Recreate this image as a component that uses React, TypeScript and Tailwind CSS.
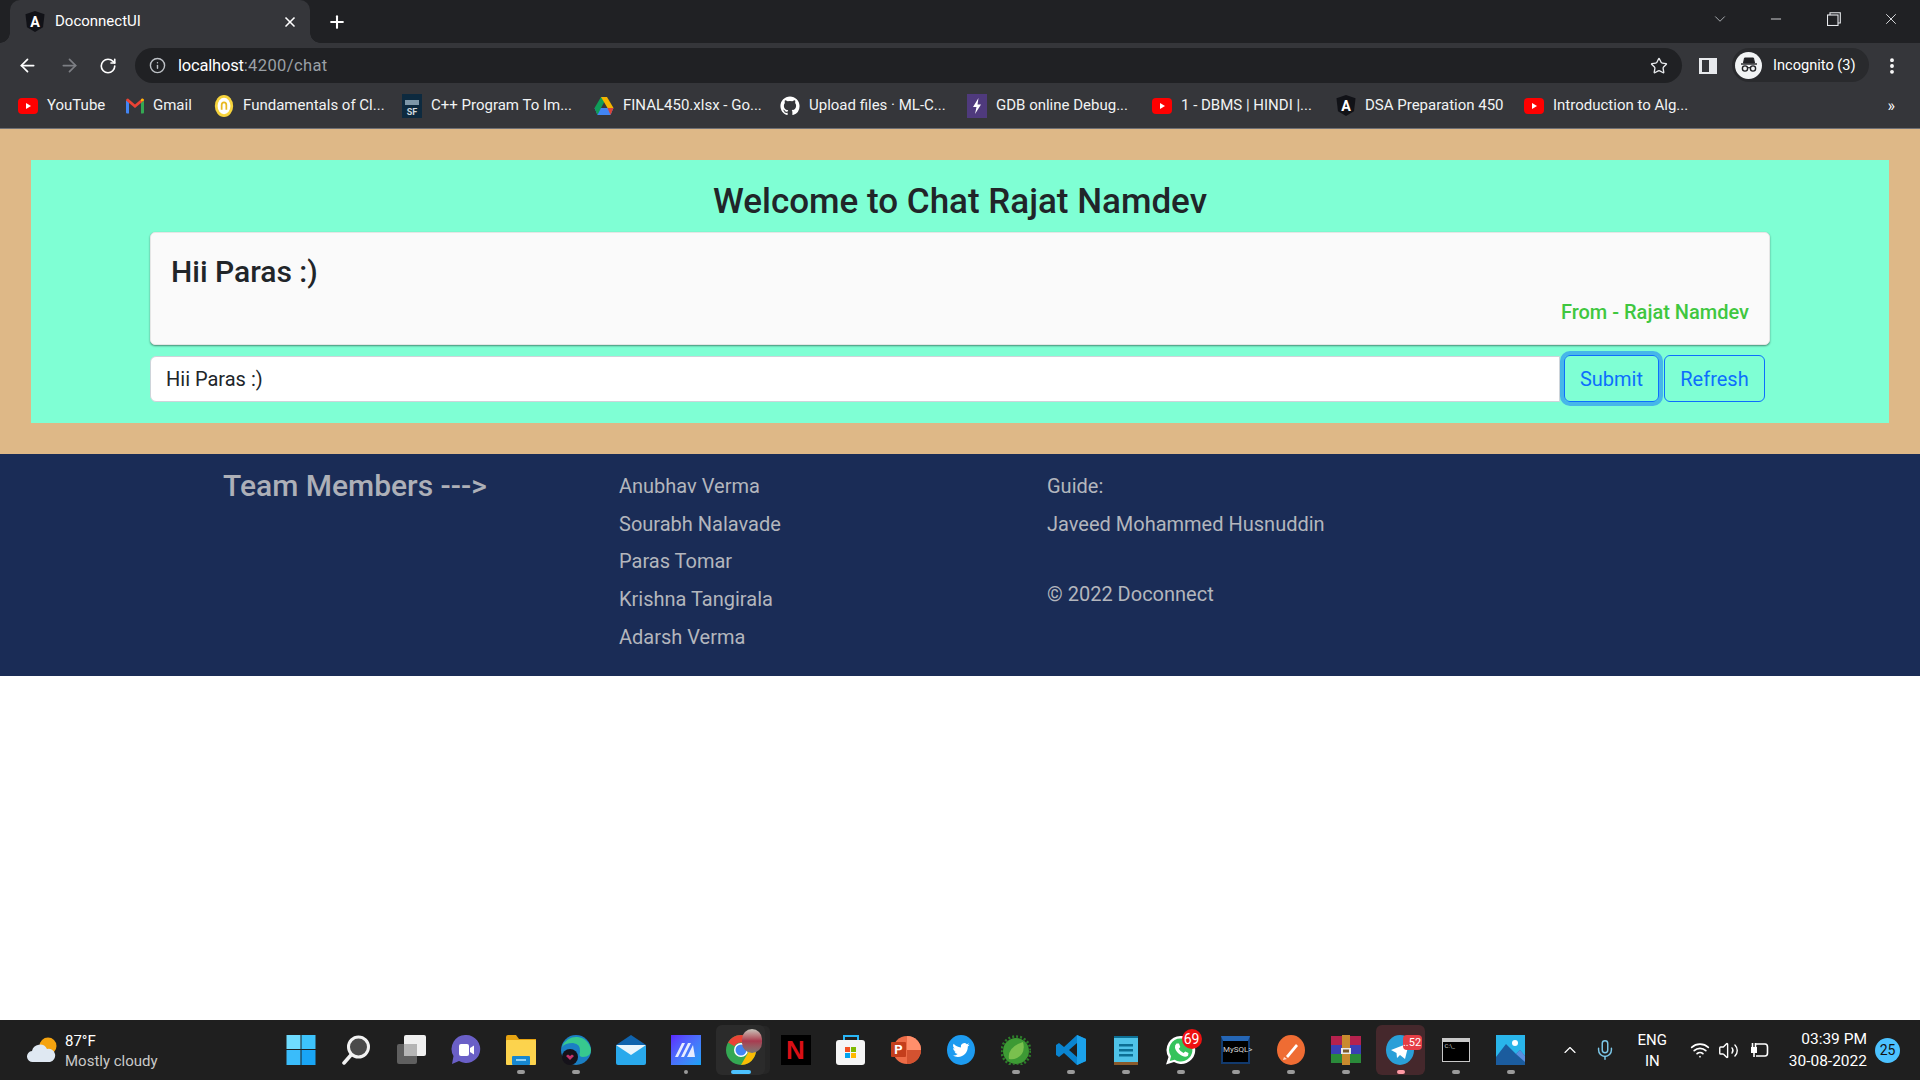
import React from "react";
import { ArrowLeft, ArrowRight, ChevronDown, ChevronUp, Info, Minus, Mic, MoreVertical, Plus, RotateCw, Star, Volume2, Wifi, X } from "lucide-react";

function AngularIcon() {
  return (
    <svg viewBox="0 0 20 22" className="w-[20px] h-[21px]">
      <path d="M10 0 L20 3.5 L18.4 17 L10 22 L1.6 17 L0 3.5 Z" fill="#111217" />
      <text x="10" y="16.5" textAnchor="middle" fontSize="15" fontWeight="700" fill="#fff" fontFamily="Roboto, sans-serif">A</text>
    </svg>
  );
}

function YoutubeIcon() {
  return (
    <svg viewBox="0 0 20 16" className="w-[20px] h-[16px]">
      <rect width="20" height="16" rx="4" fill="#f00" />
      <path d="M8 5 L13 8 L8 11 Z" fill="#fff" />
    </svg>
  );
}

function GmailIcon() {
  return (
    <svg viewBox="0 0 18 15" className="w-[18px] h-[16px]">
      <path d="M0 2 L3 3 V15 H1 Q0 15 0 14 Z" fill="#4285f4" />
      <path d="M15 3 L18 2 V14 Q18 15 17 15 H15 Z" fill="#34a853" />
      <path d="M0 2 Q0 0 2 0 L9 6 L16 0 Q18 0 18 2 L9 9.5 Z" fill="#ea4335" />
      <path d="M15 3 L18 2 Q18 0 16 0 L15 1 Z" fill="#fbbc04" />
    </svg>
  );
}

function CoinIcon() {
  return (
    <svg viewBox="0 0 20 24" className="w-[20px] h-[22px]">
      <ellipse cx="10" cy="12" rx="10" ry="12" fill="#f6d33c" />
      <ellipse cx="10" cy="12" rx="7" ry="9" fill="#fff" />
      <path d="M6.5 11 A3.5 4 0 0 1 13.5 11 V16 H11.6 V11 A1.6 2 0 0 0 8.4 11 V16 H6.5 Z" fill="#e8b923" />
    </svg>
  );
}

function SfIcon() {
  return (
    <div className="w-[20px] h-[24px] bg-[#0d2a3f] flex flex-col items-center justify-end pb-[1px] text-[9px] leading-[10px] font-bold text-[#cfd8dc]">
      <span className="w-[14px] h-[5px] mb-[2px] bg-[#7d97a8]" />
      SF
    </div>
  );
}

function DriveIcon() {
  return (
    <svg viewBox="0 0 20 18" className="w-[20px] h-[18px]">
      <path d="M7 0 H13 L7 11 H0.5 Z" fill="#0f9d58" />
      <path d="M7 0 H13 L19.5 11 H13.5 Z" fill="#f4b400" />
      <path d="M0.5 11 H19.5 L16.5 18 H3.5 Z" fill="#4285f4" />
      <path d="M0.5 11 H7 L3.5 18 Z" fill="#0f9d58" />
      <path d="M13.5 11 H19.5 L16.5 18 Z" fill="#db4437" />
    </svg>
  );
}

function GithubIcon() {
  return (
    <svg viewBox="0 0 24 24" className="w-[22px] h-[24px]">
      <path fill="#fff" d="M12 .5C5.65.5.5 5.65.5 12c0 5.08 3.29 9.39 7.86 10.91.57.1.78-.25.78-.55v-2.14c-3.2.7-3.87-1.36-3.87-1.36-.52-1.33-1.28-1.69-1.28-1.69-1.04-.71.08-.7.08-.7 1.15.08 1.76 1.18 1.76 1.18 1.03 1.76 2.69 1.25 3.34.96.1-.74.4-1.25.73-1.54-2.55-.29-5.24-1.28-5.24-5.69 0-1.26.45-2.28 1.18-3.09-.12-.29-.51-1.46.11-3.05 0 0 .97-.31 3.16 1.18a11 11 0 0 1 5.76 0c2.2-1.49 3.16-1.18 3.16-1.18.63 1.59.23 2.76.11 3.05.74.81 1.18 1.83 1.18 3.09 0 4.42-2.69 5.39-5.25 5.68.41.36.78 1.06.78 2.13v3.16c0 .31.21.66.79.55A11.5 11.5 0 0 0 23.5 12C23.5 5.65 18.35.5 12 .5z" />
    </svg>
  );
}

function GdbIcon() {
  return (
    <div className="w-[20px] h-[24px] bg-[#4f3a7d] flex items-center justify-center">
      <svg viewBox="0 0 10 16" className="w-[10px] h-[16px]">
        <path d="M6.5 0 L1 9 H4.5 L3 16 L9 6.5 H5.5 Z" fill="#fff" />
      </svg>
    </div>
  );
}

const bookmarks = [
  { icon: <YoutubeIcon />, label: "YouTube", box: "w-[20px]", text: "w-[59px]" },
  { icon: <GmailIcon />, label: "Gmail", box: "w-[18px]", text: "w-[41px]" },
  { icon: <CoinIcon />, label: "Fundamentals of Cl...", box: "w-[20px]", text: "w-[139px]" },
  { icon: <SfIcon />, label: "C++ Program To Im...", box: "w-[20px]", text: "w-[143px]" },
  { icon: <DriveIcon />, label: "FINAL450.xlsx - Go...", box: "w-[20px]", text: "w-[137px]" },
  { icon: <GithubIcon />, label: "Upload files · ML-C...", box: "w-[20px]", text: "w-[138px]" },
  { icon: <GdbIcon />, label: "GDB online Debug...", box: "w-[20px]", text: "w-[136px]" },
  { icon: <YoutubeIcon />, label: "1 - DBMS | HINDI |...", box: "w-[20px]", text: "w-[135px]" },
  { icon: <AngularIcon />, label: "DSA Preparation 450", box: "w-[20px]", text: "w-[139px]" },
  { icon: <YoutubeIcon />, label: "Introduction to Alg...", box: "w-[20px]", text: "w-[138px]" },
];

function BrowserChrome() {
  return (
    <header className="shrink-0 font-['Roboto',sans-serif] text-white">
      {/* tab strip */}
      <div className="h-[43px] bg-[#202124] flex items-end pl-[10px] pr-[20px]">
        <div className="relative w-[300px] h-[43px] bg-[#35363a] rounded-t-[10px] flex items-center pl-[15px] pr-[12px]">
          <AngularIcon />
          <span className="ml-[10px] text-[15px] leading-none">DoconnectUI</span>
          <X className="ml-auto w-[16px] h-[16px]" strokeWidth={2.5} />
          <span className="absolute -left-[10px] bottom-0 w-[10px] h-[10px] bg-[radial-gradient(circle_at_0_0,#202124_9.5px,#35363a_10px)]" />
          <span className="absolute -right-[10px] bottom-0 w-[10px] h-[10px] bg-[radial-gradient(circle_at_100%_0,#202124_9.5px,#35363a_10px)]" />
        </div>
        <div className="h-[43px] ml-[17px] flex items-center">
          <Plus className="w-[20px] h-[20px]" strokeWidth={2.5} />
        </div>
        <div className="ml-auto h-[43px] pb-[5px] flex items-center text-[#e8eaed]">
          <ChevronDown className="w-[18px] h-[18px] text-[#c4c7cc]" strokeWidth={1.1} />
          <Minus className="ml-[39px] w-[16px] h-[16px]" strokeWidth={1.3} />
          <svg viewBox="0 0 14 14" className="ml-[43px] w-[14px] h-[14px]" fill="none" stroke="#e8eaed" strokeWidth="1.1">
            <rect x="0.5" y="3" width="10.5" height="10.5" />
            <path d="M3 3 V0.8 H13.3 V11 H11" />
          </svg>
          <X className="ml-[41px] w-[18px] h-[18px]" strokeWidth={1.2} />
        </div>
      </div>

      {/* toolbar */}
      <div className="h-[40px] bg-[#35363a] pt-[5px] flex items-start pl-[17px] pr-[13px]">
        <div className="h-[35px] flex items-center">
          <ArrowLeft className="w-[21px] h-[21px]" strokeWidth={2} />
          <ArrowRight className="ml-[21px] w-[21px] h-[21px] text-[#7d7f84]" strokeWidth={2} />
          <RotateCw className="ml-[19px] w-[18px] h-[18px]" strokeWidth={2.2} />
        </div>
        <div className="ml-[18px] w-[1547px] h-[35px] rounded-full bg-[#202124] flex items-center pl-[14px] pr-[14px]">
          <Info className="w-[17px] h-[17px] text-[#bdc1c6]" strokeWidth={2} />
          <span className="ml-[12px] mt-[2px] text-[16.5px] leading-none tracking-[-0.2px]">
            localhost<span className="text-[#9aa0a6] tracking-[0.4px]">:4200/chat</span>
          </span>
          <Star className="ml-auto w-[18px] h-[18px] text-[#e8eaed]" strokeWidth={1.8} />
        </div>
        <div className="ml-[17px] h-[35px] flex items-center">
          <div className="w-[18px] h-[16px] bg-[#e8eaed] pl-[3px] py-[2px] pr-[8px] flex">
            <span className="flex-1 bg-[#35363a]" />
          </div>
        </div>
        <div className="ml-[15px] w-[137px] h-[34px] rounded-full bg-[#292a2d] flex items-center pl-[3px]">
          <div className="w-[27px] h-[27px] rounded-full bg-[#f1f3f4] flex items-center justify-center">
            <svg viewBox="0 0 20 20" className="w-[20px] h-[20px]" fill="none" stroke="#202124">
              <path d="M5.5 3 H14.5 L15.5 8 H4.5 Z" fill="#202124" />
              <path d="M2 9 H18" strokeWidth="1.4" />
              <circle cx="6" cy="13.5" r="2.6" strokeWidth="1.4" />
              <circle cx="14" cy="13.5" r="2.6" strokeWidth="1.4" />
              <path d="M8.6 13 Q10 12 11.4 13" strokeWidth="1.2" />
            </svg>
          </div>
          <span className="ml-[11px] text-[14.6px] leading-none whitespace-nowrap">Incognito (3)</span>
        </div>
        <div className="ml-[13px] h-[35px] flex items-center">
          <MoreVertical className="w-[20px] h-[20px]" strokeWidth={2.6} />
        </div>
      </div>

      {/* bookmarks */}
      <div className="h-[46px] bg-[#35363a] border-b border-[#6f7074] flex items-center pl-[18px]">
        <div className="flex items-center gap-[20px]">
          {bookmarks.map((b, i) => (
            <div key={i} className="flex items-center gap-[9px]">
              <span className={`${b.box} flex justify-center`}>{b.icon}</span>
              <span className={`${b.text} text-[15px] leading-none whitespace-nowrap text-[#f1f3f4]`}>{b.label}</span>
            </div>
          ))}
        </div>
        <span className="ml-auto mr-[25px] text-[16px] leading-none">»</span>
      </div>
    </header>
  );
}

function ChatSection() {
  return (
    <section className="bg-[#deb887] px-[31px] py-[31px] font-['Roboto',sans-serif]">
      <div className="bg-[#7fffd4] h-[263px] px-[119px]">
        <h2 className="h-[72px] pt-[10px] flex items-center justify-center text-[35px] font-medium text-[#212529] leading-none">
          Welcome to Chat Rajat Namdev
        </h2>
        <div className="h-[113px] bg-[#fafafa] rounded-[5px] border border-[#e6e6e6] shadow-[0_1px_2px_rgba(0,0,0,0.45)] pl-[20px] pr-[20px] pt-[20px] flex flex-col">
          <h3 className="text-[30px] leading-[38px] font-medium text-[#212529]">Hii Paras :)</h3>
          <p className="mt-auto mb-[20px] text-right text-[20px] leading-[24px] font-medium text-[#3fc73f]">From - Rajat Namdev</p>
        </div>
        <div className="mt-[10px] flex items-center">
          <input
            readOnly
            value="Hii Paras :)"
            className="w-[1410px] h-[46px] bg-white border border-[#ced4da] rounded-l-[6px] pl-[15px] text-[20px] text-[#212529] outline-none font-['Roboto',sans-serif]"
          />
          <button className="ml-[4px] w-[95px] h-[47px] rounded-[6px] border border-[#0d6efd] text-[#0d6efd] text-[20px] shadow-[0_0_0_4px_rgba(13,110,253,0.5)]">
            Submit
          </button>
          <button className="ml-[5px] w-[101px] h-[47px] rounded-[6px] border border-[#0d6efd] text-[#0d6efd] text-[20px]">
            Refresh
          </button>
        </div>
      </div>
    </section>
  );
}

function Footer() {
  const team = ["Anubhav Verma", "Sourabh Nalavade", "Paras Tomar", "Krishna Tangirala", "Adarsh Verma"];
  return (
    <footer className="h-[222px] bg-[#1a2c56] flex pl-[223px] pt-[17px] font-['Roboto',sans-serif] text-[20px] leading-[30px] text-[#b3b6bd]">
      <div className="w-[396px]">
        <h4 className="text-[30px] leading-[30px] font-medium text-[#adb0b8]">Team Members ---&gt;</h4>
      </div>
      <ul className="w-[428px] flex flex-col gap-[7.7px]">
        {team.map((name) => (
          <li key={name}>{name}</li>
        ))}
      </ul>
      <div className="flex flex-col">
        <p>Guide:</p>
        <p className="mt-[8px]">Javeed Mohammed Husnuddin</p>
        <p className="mt-[40px]">© 2022 Doconnect</p>
      </div>
    </footer>
  );
}

const svgClass = "w-[30px] h-[30px]";

const taskIcons: { key: string; dot?: string; active?: string; node: React.ReactNode }[] = [
  {
    key: "start",
    node: (
      <svg viewBox="0 0 30 30" className={svgClass}>
        <rect x="0.5" y="0" width="14" height="14" fill="#6fdcff" />
        <rect x="15.5" y="0" width="14" height="14" fill="#3dc3fb" />
        <rect x="0.5" y="15" width="14" height="15" fill="#3abcfa" />
        <rect x="15.5" y="15" width="14" height="15" fill="#19a5f5" />
      </svg>
    ),
  },
  {
    key: "search",
    node: (
      <svg viewBox="0 0 30 30" className={svgClass}>
        <circle cx="17.5" cy="12" r="10" fill="#4a4a4a" stroke="#f2f2f2" strokeWidth="3" />
        <path d="M10 20 L3 28" stroke="#f2f2f2" strokeWidth="3.5" strokeLinecap="round" />
      </svg>
    ),
  },
  {
    key: "tasks",
    node: (
      <svg viewBox="0 0 30 30" className={svgClass}>
        <rect x="1" y="9" width="20" height="20" rx="2" fill="#5f5f5f" />
        <rect x="8" y="0" width="22" height="21" rx="2" fill="#f0f0f0" />
        <rect x="8" y="9" width="13" height="12" fill="#b5b5b5" />
      </svg>
    ),
  },
  {
    key: "chat",
    node: (
      <svg viewBox="0 0 30 30" className={svgClass}>
        <path d="M15 0 A14 14 0 1 1 8 26 L1 29 L2.5 21 A14 14 0 0 1 15 0 Z" fill="#6a5fc7" />
        <rect x="8" y="9" width="10" height="12" rx="2" fill="#fff" />
        <path d="M19 13 L23 10.5 V19.5 L19 17 Z" fill="#fff" />
      </svg>
    ),
  },
  {
    key: "files",
    dot: "bg-[#9a9a9a]",
    node: (
      <svg viewBox="0 0 30 30" className={svgClass}>
        <path d="M0 2 Q0 0 2 0 H10 L13 4 H30 V8 H0 Z" fill="#e6a311" />
        <rect y="5" width="30" height="25" rx="1" fill="#fcd34d" />
        <rect x="6" y="21" width="18" height="9" rx="1" fill="#1787d0" />
        <rect x="10" y="24" width="10" height="2" fill="#8fd0f5" />
      </svg>
    ),
  },
  {
    key: "edge",
    dot: "bg-[#9a9a9a]",
    node: (
      <svg viewBox="0 0 30 30" className={svgClass}>
        <circle cx="15" cy="15" r="15" fill="#1b7fc4" />
        <path d="M1 12 A15 15 0 0 1 30 15 Q30 22 22 22 Q17 22 19 17 Q20 9 12 8 Q4 8 1 12 Z" fill="#37c98e" />
        <circle cx="9" cy="22" r="8" fill="#15121a" />
        <path d="M5 21 L9 25 L13 21 L11 19.5 L9 21 L7 19.5 Z" fill="#c2336b" />
      </svg>
    ),
  },
  {
    key: "mail",
    node: (
      <svg viewBox="0 0 30 30" className={svgClass}>
        <path d="M0 10 L15 0 L30 10 V12 H0 Z" fill="#0f63ad" />
        <rect y="10" width="30" height="20" rx="2" fill="#29a9ec" />
        <path d="M0 10 H30 L15 20 Z" fill="#e9f5fc" />
      </svg>
    ),
  },
  {
    key: "mweb",
    dot: "bg-[#9a9a9a] w-[4px]",
    node: (
      <div className="w-[30px] h-[30px] bg-gradient-to-br from-[#5b24ff] to-[#14a3f5] flex items-center justify-center">
        <svg viewBox="0 0 22 14" className="w-[22px] h-[14px]">
          <path d="M0 14 L7 0 H10 L3 14 Z M6 14 L13 0 H16 L9 14 Z M12 14 L18 2 L20 14 Z" fill="#e7ecff" />
        </svg>
      </div>
    ),
  },
  {
    key: "chrome",
    dot: "bg-[#4cc2ff] w-[20px]",
    active: "bg-[#2b2b2b] rounded-[6px] shadow-[6px_0_0_-1px_#262626]",
    node: (
      <div className="relative">
        <svg viewBox="0 0 30 30" className={svgClass}>
          <circle cx="15" cy="15" r="15" fill="#34a853" />
          <path d="M15 0 A15 15 0 0 1 28 7.5 H15 A7.5 7.5 0 0 0 8.5 11.2 L2 7.5 A15 15 0 0 1 15 0 Z" fill="#ea4335" />
          <path d="M28 7.5 A15 15 0 0 1 15 30 L21.5 18.7 A7.5 7.5 0 0 0 21.5 11 Z" fill="#fbbc04" />
          <circle cx="15" cy="15" r="7" fill="#fff" />
          <circle cx="15" cy="15" r="5.5" fill="#4285f4" />
        </svg>
        <span className="absolute -top-[6px] left-[16px] w-[20px] h-[24px] rounded-full bg-gradient-to-b from-[#c4c4bc] via-[#a83a50] to-[#777]" />
      </div>
    ),
  },
  {
    key: "netflix",
    node: (
      <div className="w-[30px] h-[30px] bg-black flex items-center justify-center text-[26px] leading-none font-bold text-[#d80f16] font-['Liberation_Sans',sans-serif]">N</div>
    ),
  },
  {
    key: "store",
    node: (
      <svg viewBox="0 0 30 30" className={svgClass}>
        <path d="M8 6 V1 H22 V6" fill="none" stroke="#29b6f6" strokeWidth="2" />
        <rect y="5" width="29" height="25" rx="3" fill="#f5f5f5" />
        <rect x="9" y="12" width="5" height="5" fill="#f25022" />
        <rect x="15" y="12" width="5" height="5" fill="#7fba00" />
        <rect x="9" y="18" width="5" height="5" fill="#00a4ef" />
        <rect x="15" y="18" width="5" height="5" fill="#ffb900" />
      </svg>
    ),
  },
  {
    key: "ppt",
    node: (
      <svg viewBox="0 0 30 30" className={svgClass}>
        <circle cx="16" cy="15" r="14" fill="#ed6c47" />
        <path d="M16 1 A14 14 0 0 1 30 15 H16 Z" fill="#ff8f6b" />
        <path d="M16 15 H30 A14 14 0 0 1 16 29 Z" fill="#d35230" />
        <rect y="7" width="15" height="15" rx="1" fill="#c43e1c" />
        <text x="7.5" y="19" textAnchor="middle" fontSize="13" fontWeight="700" fill="#fff" fontFamily="Roboto, sans-serif">P</text>
      </svg>
    ),
  },
  {
    key: "twitter",
    node: (
      <svg viewBox="0 0 30 30" className={svgClass}>
        <ellipse cx="15" cy="15" rx="14" ry="15" fill="#1d9bf0" />
        <g transform="translate(6.5 6.5) scale(0.71)">
          <path fill="#fff" d="M23.95 4.57a10 10 0 0 1-2.82.77 4.96 4.96 0 0 0 2.16-2.72 9.9 9.9 0 0 1-3.12 1.19 4.92 4.92 0 0 0-8.38 4.48A13.98 13.98 0 0 1 1.64 3.16a4.92 4.92 0 0 0 1.52 6.57 4.9 4.9 0 0 1-2.23-.61v.06a4.92 4.92 0 0 0 3.95 4.83 4.9 4.9 0 0 1-2.21.08 4.93 4.93 0 0 0 4.6 3.42A9.87 9.87 0 0 1 0 19.54a13.94 13.94 0 0 0 7.55 2.21c9.05 0 14-7.5 14-14 0-.21 0-.42-.02-.63a9.94 9.94 0 0 0 2.42-2.55z" />
        </g>
      </svg>
    ),
  },
  {
    key: "spring",
    dot: "bg-[#9a9a9a]",
    node: (
      <svg viewBox="0 0 30 30" className={svgClass}>
        <circle cx="15" cy="16" r="13" fill="#3d9a34" />
        <circle cx="15" cy="16" r="14.5" fill="none" stroke="#2d7e2a" strokeWidth="2.5" strokeDasharray="2 2" />
        <path d="M8 24 Q6 12 22 7 Q25 18 16 23 Q12 25 8 24 Z" fill="#7ac04e" />
      </svg>
    ),
  },
  {
    key: "vscode",
    dot: "bg-[#9a9a9a]",
    node: (
      <svg viewBox="0 0 30 30" className={svgClass}>
        <path d="M21 0 L30 4 V26 L21 30 L8 18 L3 22 L0 20 V10 L3 8 L8 12 Z M21 8 L13 15 L21 22 Z" fill="#0a84d0" />
        <path d="M21 0 L30 4 V26 L21 30 Z" fill="#1ba1ea" />
      </svg>
    ),
  },
  {
    key: "notes",
    dot: "bg-[#9a9a9a]",
    node: (
      <svg viewBox="0 0 30 30" className={svgClass}>
        <rect x="3" y="1" width="24" height="26" fill="#4fc3e8" />
        <rect x="3" y="27" width="24" height="3" fill="#8a5a2b" />
        <path d="M3 1 H27 V3 H3 Z" fill="#0c6f94" />
        <rect x="8" y="9" width="14" height="2.5" fill="#0c6f94" />
        <rect x="8" y="14" width="14" height="2.5" fill="#0c6f94" />
        <rect x="8" y="19" width="14" height="2.5" fill="#0c6f94" />
      </svg>
    ),
  },
  {
    key: "whatsapp",
    dot: "bg-[#9a9a9a]",
    node: (
      <div className="relative">
        <svg viewBox="0 0 30 30" className={svgClass}>
          <path d="M15 1 A14 14 0 1 1 8 27 L0 29.5 L2.5 22 A14 14 0 0 1 15 1 Z" fill="#fff" />
          <path d="M15 3.5 A11.5 11.5 0 1 1 8.7 24.7 L3.8 26 L5 21.3 A11.5 11.5 0 0 1 15 3.5 Z" fill="#35c35c" />
          <path d="M10.5 8.5 L13 8.5 L14.3 12 L12.8 13.8 Q14.5 17 17.5 18 L19.3 16.5 L22.5 18 L22 20.7 Q19 22.8 15 20.3 Q10.2 17.5 9 13 Q8.5 10.2 10.5 8.5 Z" fill="#fff" />
        </svg>
        <span className="absolute -top-[6px] left-[16px] w-[20px] h-[20px] rounded-full bg-[#ee1111] text-white text-[14px] leading-[20px] text-center">69</span>
      </div>
    ),
  },
  {
    key: "mysql",
    dot: "bg-[#9a9a9a]",
    node: (
      <div className="w-[29px] h-[28px] bg-black border-2 border-[#123a6e] border-t-[5px] border-t-[#2566b5] text-[#d5d5d5] text-[8px] leading-[18px] text-center">MySQL&gt;</div>
    ),
  },
  {
    key: "postman",
    dot: "bg-[#9a9a9a]",
    node: (
      <svg viewBox="0 0 30 30" className={svgClass}>
        <ellipse cx="15" cy="15" rx="14" ry="15" fill="#ef6c33" />
        <path d="M10 21 L20 9 L22 11 L12 23 Z" fill="#fff" />
        <path d="M8 22 L11 24 L7 25 Z" fill="#ffd8c6" />
      </svg>
    ),
  },
  {
    key: "winrar",
    dot: "bg-[#9a9a9a]",
    node: (
      <svg viewBox="0 0 30 30" className={svgClass}>
        <rect y="1" width="30" height="9" fill="#b5224e" />
        <rect y="10" width="30" height="9" fill="#3a3fb5" />
        <rect y="19" width="30" height="9" fill="#2a8a3a" />
        <rect x="11" y="0" width="8" height="30" fill="#c98a2e" />
        <rect x="10" y="13" width="10" height="6" fill="#e8e8e8" />
        <rect x="12" y="14.5" width="6" height="3" fill="#7a5a2c" />
      </svg>
    ),
  },
  {
    key: "telegram",
    dot: "bg-[#ff99a4]",
    active: "bg-[#45282c] rounded-[6px]",
    node: (
      <div className="relative">
        <svg viewBox="0 0 30 30" className={svgClass}>
          <ellipse cx="14" cy="15" rx="14" ry="15" fill="#2a9fd8" />
          <path d="M5 15 L23 8 L19 24 L14 20 L11 23 L10.5 18 Z" fill="#fff" />
        </svg>
        <span className="absolute top-0 left-[17px] w-[19px] h-[15px] rounded-[4px] bg-[#e53e46] text-white text-[11px] leading-[15px] text-center whitespace-nowrap">..52</span>
      </div>
    ),
  },
  {
    key: "terminal",
    dot: "bg-[#9a9a9a]",
    node: (
      <div className="w-[28px] h-[24px] bg-black border-[1.5px] border-[#c8c8c8] border-t-[4px] text-[#d0d0d0] text-[6px] leading-[8px] pl-[2px]">C:\_</div>
    ),
  },
  {
    key: "photos",
    dot: "bg-[#9a9a9a]",
    node: (
      <svg viewBox="0 0 30 30" className={svgClass}>
        <rect width="29" height="30" fill="#29b5ea" />
        <circle cx="19" cy="8" r="3" fill="#fff" />
        <path d="M0 22 L10 9 L20 19 L24 15 L29 21 V30 H0 Z" fill="#1b5c9e" />
        <path d="M20 19 L24 15 L29 21 V27 Z" fill="#5a8fe0" />
      </svg>
    ),
  },
];

function Taskbar() {
  return (
    <footer className="h-[60px] shrink-0 bg-[#1f1f1f] flex items-center text-white font-['Roboto',sans-serif]">
      <div className="w-[273px] h-full flex items-center pl-[27px]">
        <svg viewBox="0 0 30 26" className="w-[30px] h-[26px]">
          <circle cx="21" cy="9" r="8.5" fill="#f5a30f" />
          <path d="M6 25 A5.5 5.5 0 0 1 5 14 A8 8 0 0 1 20 12 A6.5 6.5 0 0 1 23 25 Z" fill="#dfe8f2" />
        </svg>
        <div className="ml-[8px] mt-[2px] flex flex-col">
          <span className="text-[15px] leading-[20px]">87°F</span>
          <span className="text-[15px] leading-[20px] text-[#c9c9c9] whitespace-nowrap">Mostly cloudy</span>
        </div>
      </div>

      <div className="flex h-full">
        {taskIcons.map((t) => (
          <div key={t.key} className="relative w-[55px] h-full flex items-center justify-center">
            {t.active && <span className={`absolute top-[5px] bottom-[5px] left-[3px] right-[3px] ${t.active}`} />}
            <span className="relative">{t.node}</span>
            {t.dot && <span className={`absolute bottom-[6px] h-[4px] rounded-full ${t.dot.includes("w-") ? t.dot : `w-[8px] ${t.dot}`}`} />}
          </div>
        ))}
      </div>

      <div className="ml-auto flex items-center h-full pr-[20px]">
        <ChevronUp className="w-[20px] h-[20px]" strokeWidth={1.4} />
        <Mic className="ml-[14px] w-[22px] h-[24px] text-[#7cc7e8]" strokeWidth={1.6} />
        <div className="ml-[22px] mt-[1px] flex flex-col items-center text-[15px] leading-[21px]">
          <span>ENG</span>
          <span>IN</span>
        </div>
        <Wifi className="ml-[23px] w-[20px] h-[20px]" strokeWidth={2} />
        <Volume2 className="ml-[8px] w-[21px] h-[21px]" strokeWidth={1.6} />
        <svg viewBox="0 0 20 16" className="ml-[11px] w-[20px] h-[16px]" fill="none" stroke="#fff" strokeWidth="1.6">
          <path d="M6 2 H15 Q17.5 2 17.5 5 V11 Q17.5 14 15 14 H6" />
          <rect x="1" y="5" width="6" height="6" fill="#fff" stroke="none" />
          <path d="M2.5 1 V5 M5.5 1 V5 M4 11 V15" />
        </svg>
        <div className="ml-[9px] w-[88px] flex flex-col items-end text-[15.5px] leading-[22px] whitespace-nowrap">
          <span>03:39 PM</span>
          <span>30-08-2022</span>
        </div>
        <span className="ml-[8px] w-[25px] h-[25px] rounded-full bg-[#4cc2ff] text-[#111] text-[14px] leading-[25px] text-center">25</span>
      </div>
    </footer>
  );
}

export default function App() {
  return (
    <div className="h-screen flex flex-col bg-white overflow-hidden">
      <BrowserChrome />
      <ChatSection />
      <Footer />
      <div className="flex-1" />
      <Taskbar />
    </div>
  );
}
